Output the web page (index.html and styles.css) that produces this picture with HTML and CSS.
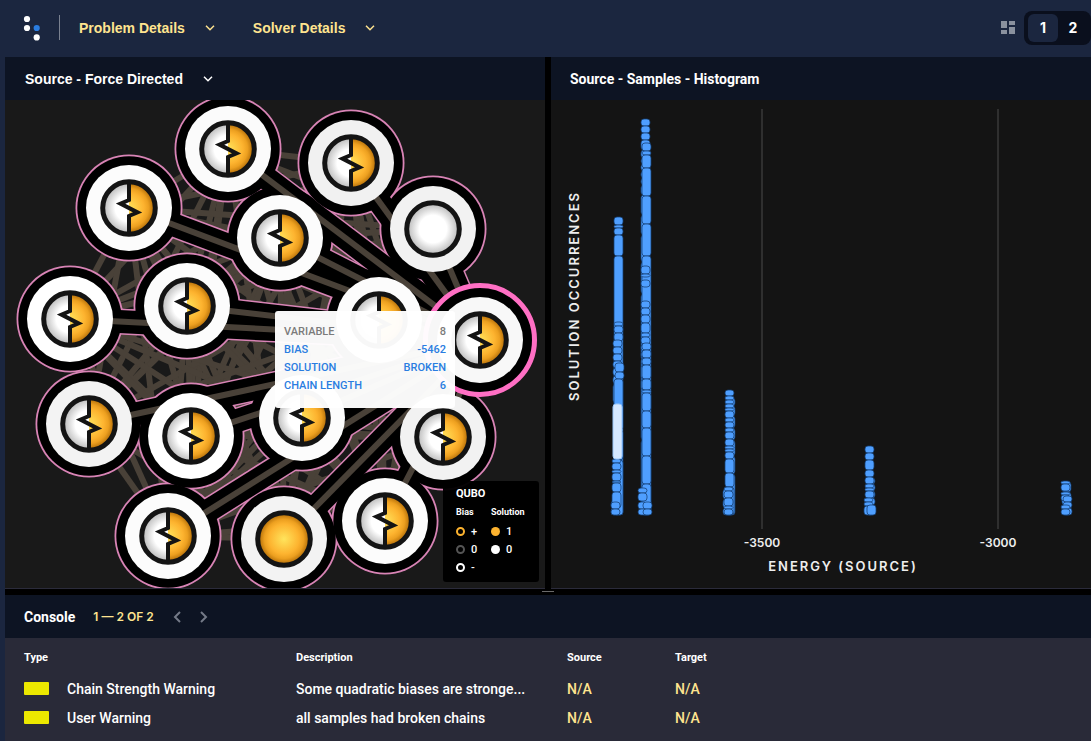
FILE: index.html
```html
<!DOCTYPE html>
<html lang="en">
<head>
<meta charset="utf-8">
<title>Problem Inspector</title>
<link rel="stylesheet" href="styles.css">
</head>
<body>
<div class="app">
  <header class="topbar">
    <svg class="logo" viewBox="0 0 18 26" role="img" aria-label="Home">
      <circle cx="4" cy="4" r="3.1" fill="#fff"/>
      <circle cx="4" cy="13" r="3.1" fill="#fff"/>
      <circle cx="13.7" cy="13" r="3.1" fill="#2a7de1"/>
      <circle cx="13.7" cy="22.4" r="3.1" fill="#fff"/>
    </svg>
    <nav class="menus">
      <button class="menu" type="button">Problem Details
        <svg class="caret" viewBox="0 0 10 6"><path d="M1 0.8 5 4.8 9 0.8"/></svg></button>
      <button class="menu" type="button">Solver Details
        <svg class="caret" viewBox="0 0 10 6"><path d="M1 0.8 5 4.8 9 0.8"/></svg></button>
    </nav>
    <div class="views">
      <svg class="grid-icon" viewBox="0 0 14 13"><path d="M0 0h6v7H0zM8 0h6v4H8zM0 9h6v4H0zM8 6h6v7H8z"/></svg>
      <div class="switch">
        <button class="switch-btn active" type="button">1</button>
        <button class="switch-btn" type="button">2</button>
      </div>
    </div>
  </header>

  <main class="panels">
    <section class="panel graph-panel">
      <div class="panel-head">
        <button class="panel-select" type="button">Source - Force Directed
          <svg class="caret" viewBox="0 0 10 6"><path d="M1 0.8 5 4.8 9 0.8"/></svg></button>
      </div>
      <div class="panel-body">
        <svg id="graph" class="plot" viewBox="5 100 540 488" preserveAspectRatio="xMidYMid meet">
          <defs>
            <radialGradient id="gold" gradientUnits="userSpaceOnUse" cx="0" cy="0" r="25">
              <stop offset="0" stop-color="#ffe45c"/><stop offset=".6" stop-color="#fdb32f"/>
              <stop offset=".78" stop-color="#eda020"/><stop offset="1" stop-color="#b26d08"/>
            </radialGradient>
            <radialGradient id="silver" gradientUnits="userSpaceOnUse" cx="0" cy="0" r="25">
              <stop offset=".55" stop-color="#fff"/><stop offset="1" stop-color="#bdbdbd"/>
            </radialGradient>
            <g id="broken">
              <circle r="26.3" fill="url(#silver)"/>
              <path d="M0-26.3A26.3 26.3 0 0 1 0 26.3z" fill="url(#gold)"/>
              <circle class="ring" r="26.3"/>
              <path class="bolt" d="M0-25V-8L-8.5-4.4 8.5 4.4 0 8V25"/>
            </g>
            <g id="one"><circle r="26.3" fill="url(#gold)"/><circle class="ring" r="26.3"/></g>
            <g id="zero"><circle r="26.3" fill="url(#silver)"/><circle class="ring" r="26.3"/></g>
          </defs>
        </svg>
        <dl class="tooltip">
          <div class="tip-row muted"><dt>VARIABLE</dt><dd>8</dd></div>
          <div class="tip-row"><dt>BIAS</dt><dd>-5462</dd></div>
          <div class="tip-row"><dt>SOLUTION</dt><dd>BROKEN</dd></div>
          <div class="tip-row"><dt>CHAIN LENGTH</dt><dd>6</dd></div>
        </dl>
        <div class="legend">
          <div class="legend-title">QUBO</div>
          <div class="legend-cols">
            <div class="legend-col">
              <div class="legend-name">Bias</div>
              <div class="legend-item"><i class="dot ring-gold"></i>+</div>
              <div class="legend-item"><i class="dot ring-grey"></i>0</div>
              <div class="legend-item"><i class="dot ring-white"></i>-</div>
            </div>
            <div class="legend-col">
              <div class="legend-name">Solution</div>
              <div class="legend-item"><i class="dot fill-gold"></i>1</div>
              <div class="legend-item"><i class="dot fill-white"></i>0</div>
            </div>
          </div>
        </div>
      </div>
    </section>

    <section class="panel">
      <div class="panel-head"><h2 class="panel-title">Source - Samples - Histogram</h2></div>
      <div class="panel-body dark">
        <svg id="histogram" class="plot" viewBox="551 100 540 488" preserveAspectRatio="xMidYMid meet">
          <path class="gridline" d="M762 109V529M998 109V529"/>
          <text class="tick" x="762" y="547">-3500</text>
          <text class="tick" x="998" y="547">-3000</text>
          <text class="axis" x="843" y="571">ENERGY (SOURCE)</text>
          <text class="axis" transform="translate(579 296) rotate(-90)">SOLUTION OCCURRENCES</text>
        </svg>
      </div>
    </section>
  </main>

  <div class="splitter"><span class="grip"></span></div>

  <section class="console">
    <div class="panel-head console-head">
      <h2 class="panel-title">Console</h2>
      <span class="range">1 — 2 OF 2</span>
      <button class="pager" type="button" aria-label="Previous"><svg viewBox="0 0 8 12"><path d="M7 1 2 6 7 11"/></svg></button>
      <button class="pager" type="button" aria-label="Next"><svg viewBox="0 0 8 12"><path d="M1 1 6 6 1 11"/></svg></button>
    </div>
    <div class="log">
      <table class="log-table">
        <thead>
          <tr><th class="c-type">Type</th><th class="c-desc">Description</th><th class="c-src">Source</th><th>Target</th></tr>
        </thead>
        <tbody>
          <tr><td><span class="kind"><i class="swatch"></i>Chain Strength Warning</span></td><td>Some quadratic biases are stronge...</td><td class="na">N/A</td><td class="na">N/A</td></tr>
          <tr><td><span class="kind"><i class="swatch"></i>User Warning</span></td><td>all samples had broken chains</td><td class="na">N/A</td><td class="na">N/A</td></tr>
        </tbody>
      </table>
    </div>
  </section>
</div>
<script src="plots.js"></script>
</body>
</html>
```
FILE: styles.css
```css
* { box-sizing: border-box; }
body { margin: 0; background: #1b263f; color: #fff; font-family: Roboto, sans-serif; }
button { border: 0; padding: 0; background: none; color: inherit; font: inherit; }
h2, dl, dd { margin: 0; }

.app { min-height: 100vh; display: flex; flex-direction: column; padding-left: 5px; }

.topbar { display: flex; align-items: center; height: 57px; padding: 0 0 2px 18px; overflow: hidden; }
.logo { width: 18px; height: 26px; }
.menus { display: flex; align-items: center; gap: 38px; height: 25px; margin-left: 18px; padding-left: 19px; border-left: 1px solid #7a8190; }
.menu, .panel-select { display: flex; align-items: center; gap: 20px; font: bold 14px/20px "Liberation Sans", sans-serif; }
.menu { color: #ffe48f; }
.caret { width: 10px; height: 6px; fill: none; stroke: currentColor; stroke-width: 1.5; }
.views { display: flex; align-items: center; gap: 9px; margin-left: auto; }
.grid-icon { width: 14px; height: 13px; fill: #8a919e; }
.switch { display: flex; padding: 3px 3px 3px 4px; border-radius: 8px; background: #0a0f1d; }
.switch-btn { width: 30px; height: 28px; border-radius: 6px; font-family: Inter, sans-serif; font-size: 14px; font-weight: 700; }
.switch-btn.active { background: #1b263f; }

.panels { flex: 1; display: grid; grid-template-columns: 1fr 1fr; gap: 6px; background: #000; }
.panel { display: flex; flex-direction: column; min-width: 0; border-bottom: 1px solid #2b2b3b; }
.panel-head { display: flex; align-items: center; height: 43px; padding: 0 19px; background: #0d1423; }
.graph-panel .panel-head { padding-left: 20px; }
.panel-title { font-size: 14px; line-height: 20px; font-weight: 700; }
.panel-body { position: relative; flex: 1; min-height: 300px; background: #191919; overflow: hidden; }
.panel-body.dark { background: #141414; }
.plot { position: absolute; inset: 0; width: 100%; height: 100%; }

.edge { stroke: #494138; stroke-width: 6; }
.band-line { stroke: #d984b6; stroke-width: 26; }
.band-disc { fill: #d984b6; }
.core-line { stroke: #000; stroke-width: 23; }
.core-disc { fill: #000; }
.picked { fill: #000; stroke: #ff6fc4; stroke-width: 5; }
.ring { fill: none; stroke: #141414; stroke-width: 5; }
.bolt { fill: none; stroke: #141414; stroke-width: 4; stroke-miterlimit: 10; }

.tooltip { position: absolute; left: 270px; top: 211px; width: 180px; height: 97px; padding: 12px 9px; border-radius: 3px; background: rgba(255, 255, 255, .97); color: #2a7de1; font-size: 11px; line-height: 18px; font-weight: 500; }
.tip-row { display: flex; justify-content: space-between; }
.tip-row.muted { color: #7b7b7b; }

.legend { position: absolute; right: 6px; bottom: 6px; width: 96px; height: 101px; padding: 4px 13px; border-radius: 3px; background: rgba(0, 0, 0, .97); }
.legend-title { font-size: 11px; line-height: 17px; font-weight: 700; }
.legend-cols { display: grid; grid-template-columns: 35px 1fr; }
.legend-name { font-size: 9px; line-height: 20px; font-weight: 700; }
.legend-item { display: flex; align-items: center; gap: 6px; height: 18px; font-size: 11px; font-weight: 500; }
.dot { width: 9px; height: 9px; border-radius: 50%; }
.ring-gold { border: 2px solid #fdb32f; }
.ring-grey { border: 2px solid #555; }
.ring-white { border: 2px solid #fff; }
.fill-gold { background: #fdb32f; }
.fill-white { background: #fff; }

.gridline { stroke: #383838; stroke-width: 1.5; }
.tick { fill: #eee; font: 600 12px Inter, sans-serif; text-anchor: middle; }
.axis { fill: #eee; font: 600 13px Inter, sans-serif; letter-spacing: 2px; text-anchor: middle; }
.bar { fill: #4f9fff; stroke: rgba(20, 62, 112, .75); stroke-width: 1; }
.bar.hot { fill: #d5e8ff; stroke: #9cc8fb; }

.splitter { display: flex; justify-content: center; height: 6px; padding-top: 2px; background: #000; }
.grip { width: 12px; height: 1px; background: #6a6a6a; }

.range { margin-left: 18px; color: #ffe48f; font-family: Inter, sans-serif; font-size: 12px; font-weight: 600; }
.pager { width: 8px; height: 12px; margin-left: 19px; }
.pager svg { display: block; width: 8px; height: 12px; fill: none; stroke: #747a87; stroke-width: 2; }
.log { height: 103px; padding: 5px 19px; background: #292a38; }
.log-table { width: 100%; table-layout: fixed; border-collapse: collapse; font-size: 14px; font-weight: 500; }
.log-table th { height: 28px; padding: 0; text-align: left; font-size: 11px; font-weight: 700; }
.log-table td { height: 29px; padding: 0; white-space: nowrap; }
.log-table tbody tr:first-child td { padding-top: 3px; height: 32px; }
.c-type { width: 272px; }
.c-desc { width: 271px; }
.c-src { width: 108px; }
.kind { display: flex; align-items: center; gap: 18px; }
.swatch { width: 25px; height: 13px; border-radius: 1px; background: #ece800; }
.na { color: #ffe48f; }
```
FILE: plots.js
```js
const NS = 'http://www.w3.org/2000/svg';

function add(parent, tag, attrs) {
  const el = document.createElementNS(NS, tag);
  for (const key in attrs) el.setAttribute(key, attrs[key]);
  parent.appendChild(el);
  return el;
}

/* x, y, symbol, bias shade */
const nodes = [
  [228, 149, 'broken', '#fbfbfb'], [351, 163, 'broken', '#f1f1f1'],
  [129, 208, 'broken', '#fcfcfc'], [280, 238, 'broken', '#fcfcfc'],
  [433, 229, 'zero', '#f2f2f2'], [187, 306, 'broken', '#fcfcfc'],
  [70, 319, 'broken', '#ffffff'], [379, 320, 'broken', '#fcfcfc'],
  [480, 340, 'broken', '#f8f8f8'], [89, 424, 'broken', '#f3f3f3'],
  [191, 436, 'broken', '#ffffff'], [302, 418, 'broken', '#fcfcfc'],
  [443, 437, 'broken', '#f2f2f2'], [168, 536, 'broken', '#fcfcfc'],
  [284, 539, 'one', '#f3f3f3'], [385, 521, 'broken', '#fcfcfc']
];
const picked = nodes[8];
const others = nodes.filter(n => n !== picked);
const graph = document.getElementById('graph');
const link = (a, b, cls) => add(graph, 'line', { x1: a[0], y1: a[1], x2: b[0], y2: b[1], class: cls });
const disc = (n, r, cls) => add(graph, 'circle', { cx: n[0], cy: n[1], r, class: cls });

nodes.forEach((a, i) => nodes.slice(i + 1).forEach(b => link(a, b, 'edge')));
others.forEach(n => link(n, picked, 'band-line'));
others.forEach(n => disc(n, 53.5, 'band-disc'));
others.forEach(n => link(n, picked, 'core-line'));
others.forEach(n => disc(n, 51.7, 'core-disc'));
others.forEach(n => link(n, picked, 'edge'));
disc(picked, 54.5, 'picked');
nodes.forEach(n => {
  add(graph, 'circle', { cx: n[0], cy: n[1], r: 43, fill: n[3] });
  add(graph, 'use', { href: '#' + n[2], x: n[0], y: n[1] });
});

/* Each group: left edge, then consecutive cut positions from top to bottom */
const stacks = [
  [611, 501, 508, 515], [614, 217, 225, 228, 235, 256, 515],
  [614, 322, 326, 333, 341], [613, 340, 347, 354, 361, 368, 376, 384, 403],
  [615, 363, 372, 379], [614, 379, 430, 460, 515],
  [612, 459, 463, 470, 473, 481, 483, 492, 508],
  [611, 502, 509, 515],
  [641, 119, 126, 133, 140, 150, 158, 164, 171, 178, 185, 195, 215, 235, 262, 294, 360, 440, 515],
  [642, 143, 151, 155, 168, 196, 224, 256, 515],
  [641, 266, 274, 277], [641, 280, 287],
  [641, 301, 308, 315, 323, 333, 337, 344, 351, 358, 365, 379, 390],
  [642, 343, 350, 358, 365, 379, 390, 393, 411, 428, 456, 484, 515],
  [638, 488, 493, 501], [638, 502, 509, 515], [643, 502, 509, 515],
  [726, 398, 406, 416, 428, 440, 456, 474, 515],
  [725, 390, 396, 400, 404, 408, 411, 418, 422, 428, 432, 439, 446, 449, 452, 459, 473, 487, 515],
  [723, 489, 499, 508, 515], [724, 487, 491, 498, 506, 509, 515],
  [866, 478, 484, 491, 498, 505, 515],
  [865, 446, 453, 460, 470, 477, 484, 488, 491, 498],
  [864, 498, 502, 506, 515], [867, 505, 515],
  [1062, 482, 492, 505, 515], [1061, 481, 484, 491],
  [1061, 492, 495, 501], [1063, 496, 502, 508, 515], [1061, 505, 509, 515]
];
const chart = document.getElementById('histogram');
const bar = (x, top, bottom, cls) =>
  add(chart, 'rect', { x, y: top, width: 9, height: bottom - top, rx: 3, class: cls });

stacks.forEach(([x, ...cuts]) => {
  for (let i = 0; i < cuts.length - 1; i++) bar(x, cuts[i], cuts[i + 1], 'bar');
});
bar(613, 404, 459, 'bar hot');
```
